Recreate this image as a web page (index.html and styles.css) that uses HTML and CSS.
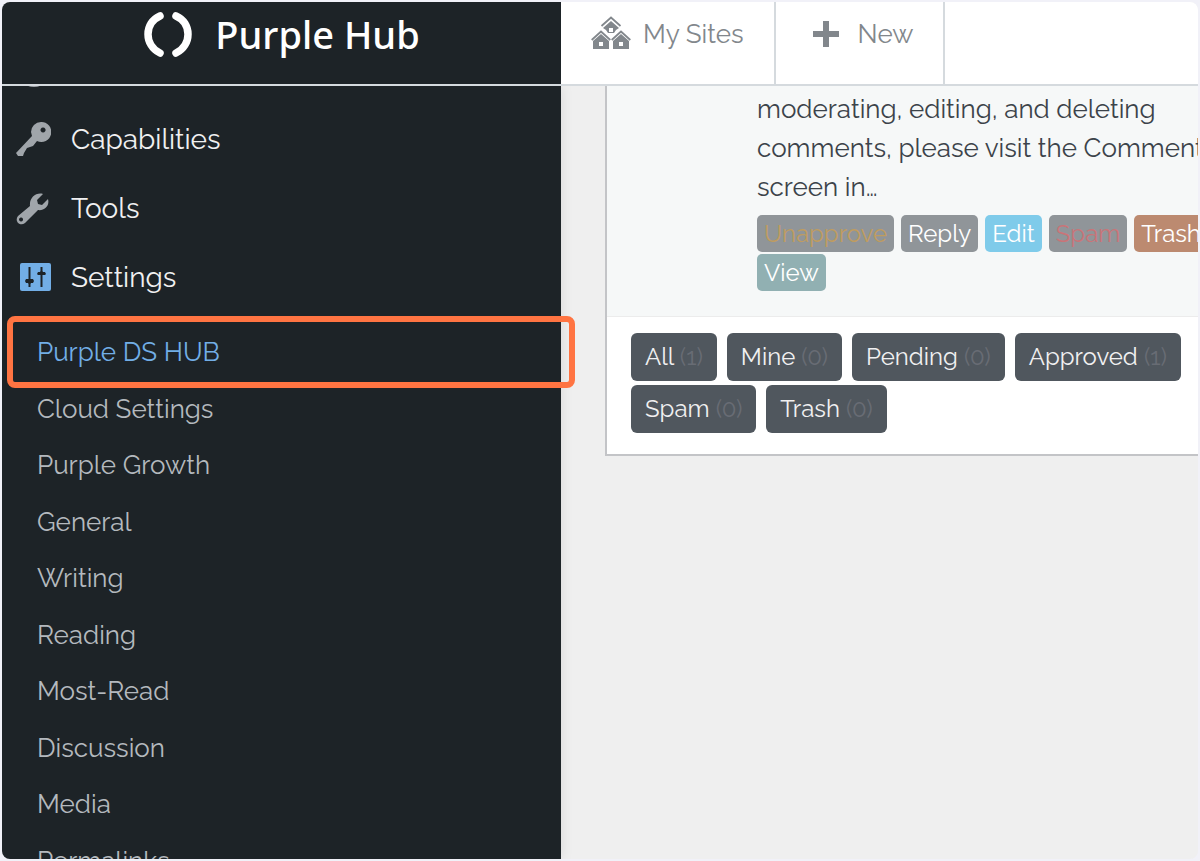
FILE: index.html
```html
<!DOCTYPE html>
<html lang="en">
<head>
    <meta charset="UTF-8">
    <meta name="viewport" content="width=device-width, initial-scale=1.0">
    <title>Purple Hub</title>
    <link rel="stylesheet" href="styles.css">
</head>
<body>
    <div class="frame">
        <header class="topbar">
            <a class="brand" href="#">
                <svg width="50" height="48" viewBox="0 0 50 48" fill="none" stroke="#fff" stroke-width="7.500" stroke-linecap="round">
                    <path d="M17 6C1 13 1 35 17 43M33 6C49 13 49 35 33 43"/>
                </svg>
                <span>Purple Hub</span>
            </a>
            <nav class="tools">
                <a href="#">
                    <svg width="40" height="34" viewBox="0 0 40 34" fill="#82878c">
                        <path fill-rule="evenodd" d="M20 5l8 7-3 2-2 3h-6l-2-3-3-2zM18 12h4v4h-4zM10 18l8 7v8H2v-8zM8 26v4h4v-4zM30 18l8 7v8H22v-8zM28 26v4h4v-4z"/>
                        <path fill="none" stroke="#82878c" stroke-width="1.800" d="M10.500 10L20 1.500l9.500 8.500M.7 24L10 15.500l9.300 8.500M20.700 24l9.300-8.500L39.300 24"/>
                    </svg>
                    <span>My Sites</span>
                </a>
                <a href="#">
                    <svg class="plus" width="26" height="26" viewBox="0 0 26 26" fill="#82878c">
                        <path d="M10 0h6v10h10v6H16v10h-6V16H0v-6h10z"/>
                    </svg>
                    <span>New</span>
                </a>
            </nav>
        </header>

        <div class="page">
            <aside class="sidebar">
                <ul class="menu">
                    <li>
                        <a href="#" aria-label="Users">
                            <svg width="36" height="36" viewBox="0 0 36 36" fill="#a0a5aa"><circle cx="19" cy="17" r="17"/></svg>
                        </a>
                    </li>
                    <li>
                        <a href="#">
                            <svg width="36" height="36" viewBox="0 0 36 36" fill="#a0a5aa">
                                <path fill-rule="evenodd" d="M26 0a10 10 0 1 1-4 19l-4 5-6 2-3 5-1 3H3l-2-3 16-17-1-4A10 10 0 0 1 26 0zM28 5.500a2.500 2.500 0 1 0 .1 0z"/>
                            </svg>
                            <span>Capabilities</span>
                        </a>
                    </li>
                    <li>
                        <a href="#">
                            <svg width="36" height="36" viewBox="0 0 36 36" fill="#a0a5aa">
                                <path fill-rule="evenodd" d="M28 3l-6 6 1 4 4 1 6-6c2 7-4 12-10 11L10 32c-5 4-11-2-7-7l12-10C14 7 21 1 28 3zM6 26.500a2 2 0 1 0 .1 0z"/>
                            </svg>
                            <span>Tools</span>
                        </a>
                    </li>
                    <li>
                        <a href="#">
                            <svg width="36" height="36" viewBox="0 0 36 36">
                                <rect x="5" y="3" width="31" height="28" rx="2" fill="#72aee6"/>
                                <path fill="none" stroke="#1d2327" stroke-width="2" d="M14.500 7v20M26.500 7v20"/>
                                <path fill="#1d2327" d="M11 19h7l1 2-1 2h-2l-1 1h-1l-1-1h-2l-1-2zM23 12h2l1-1h1l1 1h2l1 2-1 1h-7l-1-1z"/>
                            </svg>
                            <span>Settings</span>
                        </a>
                    </li>
                </ul>
                <ul class="submenu">
                    <li class="current"><a href="#">Purple DS HUB</a></li>
                    <li><a href="#">Cloud Settings</a></li>
                    <li><a href="#">Purple Growth</a></li>
                    <li><a href="#">General</a></li>
                    <li><a href="#">Writing</a></li>
                    <li><a href="#">Reading</a></li>
                    <li><a href="#">Most-Read</a></li>
                    <li><a href="#">Discussion</a></li>
                    <li><a href="#">Media</a></li>
                    <li><a href="#">Permalinks</a></li>
                </ul>
            </aside>

            <main class="content">
                <section class="widget">
                    <div class="comment">
                        <p>moderating, editing, and deleting<br>comments, please visit the Comments<br>screen in…</p>
                        <div class="actions">
                            <button class="unapprove">Unapprove</button>
                            <button>Reply</button>
                            <button class="edit">Edit</button>
                            <button class="spam">Spam</button>
                            <button class="trash">Trash</button>
                            <button class="view">View</button>
                        </div>
                    </div>
                    <div class="filters">
                        <a href="#">All <span>(1)</span></a>
                        <a href="#">Mine <span>(0)</span></a>
                        <a href="#">Pending <span>(0)</span></a>
                        <a href="#">Approved <span>(1)</span></a>
                        <a href="#">Spam <span>(0)</span></a>
                        <a href="#">Trash <span>(0)</span></a>
                    </div>
                </section>
            </main>
        </div>
    </div>
</body>
</html>
```
FILE: styles.css
```css
* {
    box-sizing: border-box;
}

body {
    margin: 0;
    background-color: #f1f1f8;
    font-family: Raleway, Lato, sans-serif;
    font-size: 26px;
    color: #3c434a;
}

a {
    color: inherit;
    text-decoration: none;
}

ul {
    list-style: none;
    margin: 0;
    padding: 0;
}

.frame {
    display: flex;
    flex-direction: column;
    height: calc(100vh - 4px);
    margin: 2px;
    border-radius: 8px;
    overflow: hidden;
    background-color: #efefef;
}

.topbar {
    display: flex;
    flex: none;
    background-color: #fff;
    border-bottom: 2px solid #d5dade;
    position: relative;
    z-index: 1;
}

.brand {
    display: flex;
    justify-content: center;
    gap: 22px;
    width: 559px;
    height: 82px;
    padding-top: 8px;
    background-color: #1d2327;
    color: #fff;
    font-family: "Noto Sans", "Open Sans", sans-serif;
    font-size: 38px;
    font-weight: 500;
    line-height: 48px;
}

.tools {
    display: flex;
    color: #82878c;
}

.tools a {
    display: flex;
    gap: 12px;
    padding: 14px 30px;
    border-right: 2px solid #d5dade;
    line-height: 37px;
}

.tools .plus {
    margin: 5px 7px;
}

.page {
    display: flex;
    flex: 1;
    min-height: 0;
}

.sidebar {
    flex: none;
    width: 559px;
    background-color: #1d2327;
    box-shadow: 0 0 12px rgba(0, 0, 0, 0.1);
    position: relative;
}

.menu {
    margin-top: -50px;
    color: #f0f0f1;
    font-size: 28px;
}

.menu a {
    display: flex;
    align-items: center;
    gap: 20px;
    height: 69px;
    padding-left: 13px;
}

.submenu {
    padding-top: 12px;
    color: #b4b9be;
    line-height: 57px;
}

.submenu li {
    padding-left: 35px;
}

.submenu li:nth-child(even) {
    line-height: 56px;
}

.submenu .current {
    color: #72aee6;
    position: relative;
}

/* orange marker round the current entry */
.submenu .current::after {
    content: "";
    position: absolute;
    top: -8px;
    bottom: -7px;
    left: 5px;
    right: -14px;
    border: 6px solid #ff7442;
    border-radius: 8px;
}

.content {
    flex: 1;
    min-width: 0;
    padding-left: 44px;
}

.widget {
    margin-right: -40px;
    border: 2px solid #c3c4c7;
    border-top: none;
    background-color: #fff;
}

.comment {
    padding: 4px 0 25px 150px;
    background-color: #f6f8f8;
    border-bottom: 1px solid #ececec;
}

.comment p {
    margin: 0;
    line-height: 39px;
    white-space: nowrap;
}

.actions {
    display: flex;
    flex-wrap: wrap;
    gap: 2px 7px;
    padding-top: 8px;
}

.actions button {
    height: 37px;
    padding: 0 7px;
    border: none;
    border-radius: 5px;
    background-color: #909599;
    color: #fff;
    font-family: inherit;
    font-size: 24px;
    line-height: 36px;
    cursor: pointer;
}

.actions .unapprove {
    color: #bf9c60;
}

.actions .edit {
    background-color: #7fcbea;
}

.actions .spam {
    color: #c97478;
}

.actions .trash {
    background-color: #bc8a70;
}

.actions .view {
    background-color: #91b0b2;
}

.filters {
    display: flex;
    flex-wrap: wrap;
    gap: 4px 10px;
    padding: 16px 24px 21px;
    font-size: 24px;
    line-height: 48px;
}

.filters a {
    padding: 0 14px;
    border-radius: 6px;
    background-color: #50575e;
    color: #f0f0f1;
}

.filters span {
    color: #686c74;
}
```
